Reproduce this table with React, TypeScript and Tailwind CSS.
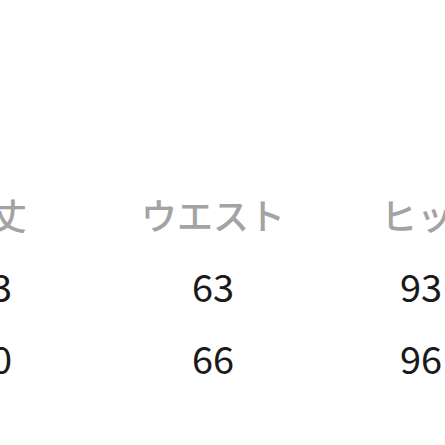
import React from "react";

const rows = [
  ["73", "63", "93"],
  ["70", "66", "96"],
];

export default function App() {
  return (
    <div className="w-[445px] h-[445px] bg-white overflow-hidden" style={{ fontFamily: '"Noto Sans CJK JP", "Noto Sans", sans-serif' }}>
      <div className="pt-[178px] ml-[-120px] flex flex-col">
        <div className="flex h-[72px] items-center text-[36px] leading-none font-medium text-[#a3a3a3]">
          <div className="w-[222px] shrink-0 text-center">着丈</div>
          <div className="w-[222px] shrink-0 text-center">ウエスト</div>
          <div className="w-[222px] shrink-0 text-center">ヒップ</div>
        </div>
        {rows.map((r, i) => (
          <div key={i} className="flex h-[72px] items-center text-[38px] leading-none text-[#1a1a1a]">
            <div className="w-[222px] shrink-0 text-center">{r[0]}</div>
            <div className="w-[222px] shrink-0 text-center">{r[1]}</div>
            <div className="w-[222px] shrink-0 text-center pr-[28px]">{r[2]}</div>
          </div>
        ))}
      </div>
    </div>
  );
}
